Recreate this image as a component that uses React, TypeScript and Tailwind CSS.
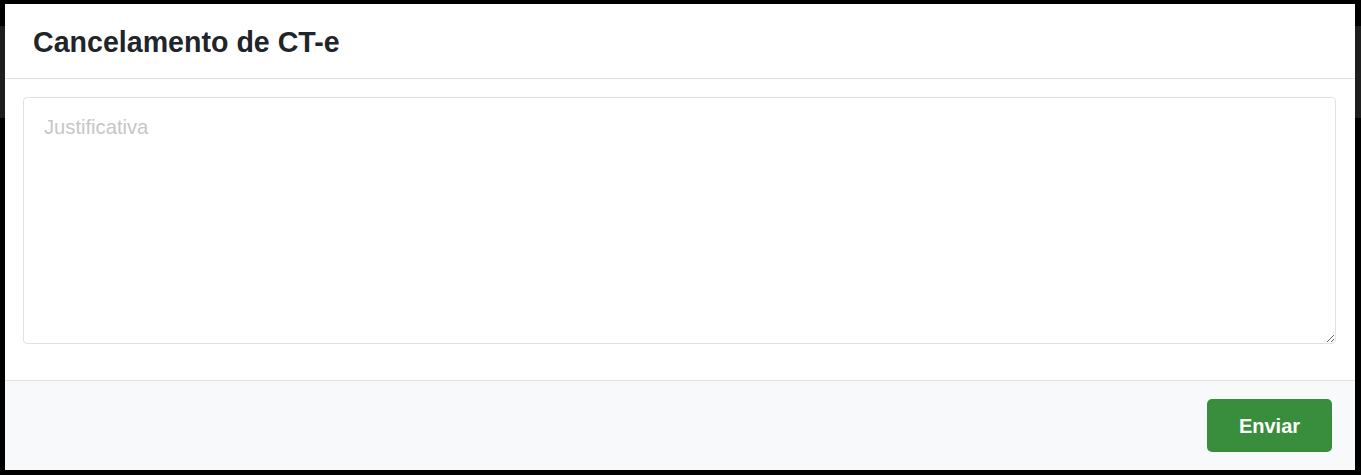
import { useState } from "react";

export default function App() {
  const [justificativa, setJustificativa] = useState("");

  return (
    <div className="relative h-[475px] w-full overflow-hidden bg-black font-['Liberation_Sans',Arial,sans-serif]">
      {/* page behind the backdrop */}
      <div className="mt-[26px] h-[92px] w-full bg-[#1e1e1e]" />

      <div className="absolute left-[5px] top-[4px] flex h-[466px] w-[1350px] flex-col bg-white">
        <div className="flex h-[75px] items-center border-b border-[#dee2e6] px-[28px]">
          <h1 className="pt-[2px] text-[28.6px] font-bold leading-none text-[#212529]">Cancelamento de CT-e</h1>
        </div>

        <div className="px-[18px] pb-[36px] pt-[18px]">
          <textarea
            value={justificativa}
            onChange={(e) => setJustificativa(e.target.value)}
            placeholder="Justificativa"
            className="block h-[247px] w-[1313px] rounded-[4px] border border-[#dee2e6] px-[20px] pb-[12px] pt-[14px] text-[20.2px] leading-normal text-[#495057] placeholder-[#c6c6c6] outline-none"
          />
        </div>

        <div className="flex flex-1 items-center justify-end border-t border-[#dee2e6] bg-[#f8f9fa] pr-[23px]">
          <button className="h-[53px] w-[125px] rounded-[5px] bg-[#388e3c] text-[20px] font-bold text-white">
            Enviar
          </button>
        </div>
      </div>
    </div>
  );
}
